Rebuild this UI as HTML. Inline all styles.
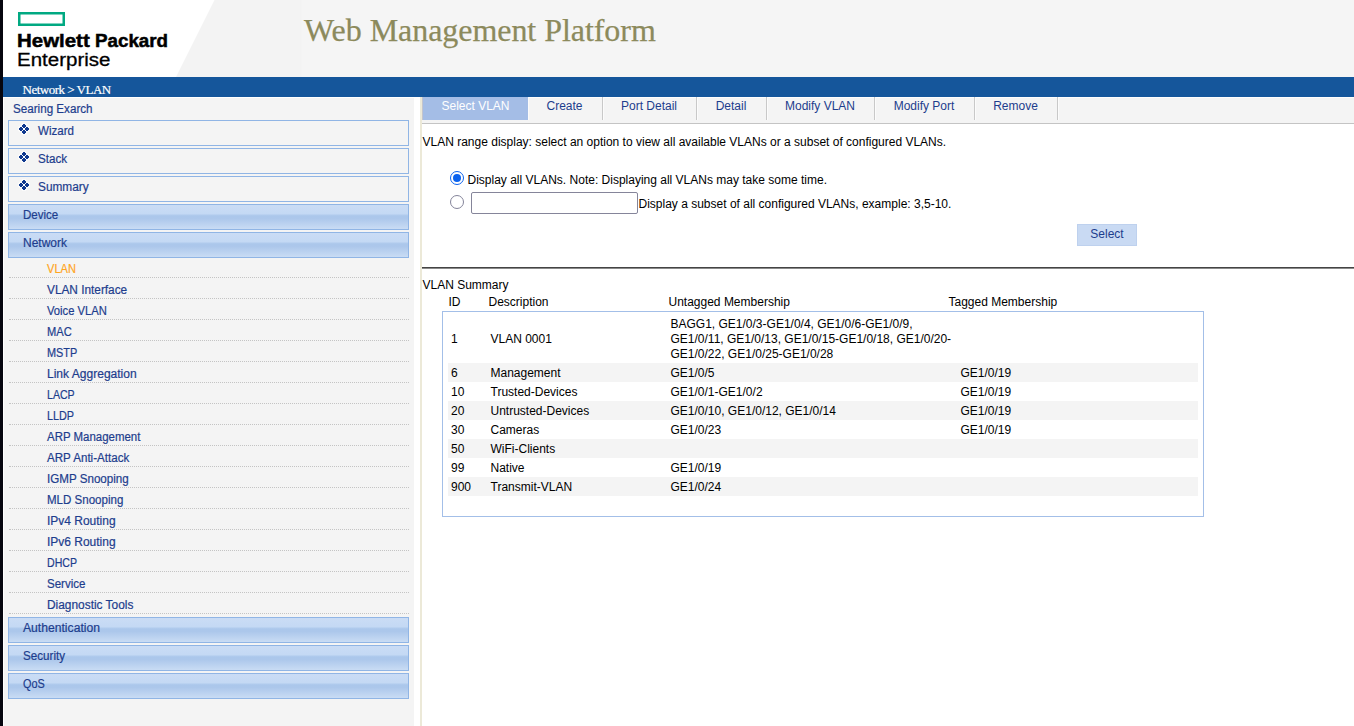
<!DOCTYPE html>
<html>
<head>
<meta charset="utf-8">
<title>Web Management Platform</title>
<style>
*{box-sizing:border-box;margin:0;padding:0}
html,body{width:1354px;height:726px;overflow:hidden;background:#fff}
body{position:relative;font-family:"Liberation Sans",sans-serif;font-size:12px;color:#000}
#blackbar{position:absolute;left:0;top:0;width:3px;height:726px;background:#06060f}
#header{position:absolute;left:3px;top:0;width:1351px;height:77px;background:#f5f5f5;overflow:hidden}
#header svg{position:absolute;left:0;top:0}
#title{position:absolute;left:301px;top:12px;font-family:"Liberation Serif",serif;font-size:32px;letter-spacing:-0.05px;line-height:37px;color:#8c8a5c;-webkit-text-stroke:0.25px #8c8a5c;white-space:nowrap}
#bluebar{position:absolute;left:3px;top:77px;width:1351px;height:20px;background:#15569b}
#crumb{position:absolute;left:19.5px;top:5px;font-family:"Liberation Serif",serif;font-size:13px;letter-spacing:-0.5px;line-height:16px;color:#fff;-webkit-text-stroke:0.2px #fff;white-space:nowrap}
#sidebar{position:absolute;left:3px;top:97px;width:411px;height:629px;background:#f4f4f4;color:#1d3d8d;-webkit-text-stroke:0.2px currentColor}
#devname{position:absolute;transform-origin:0 0;left:9.8px;top:5px;line-height:15px;white-space:nowrap}
.box{position:absolute;left:5px;width:401px;height:26px;border:1px solid #90b5e5;line-height:14px;white-space:nowrap}
.box span.t{position:absolute;transform-origin:0 0;left:14px;top:3px}
.box svg.i{position:absolute;left:9px;top:2px}
.box span.w{position:absolute;transform-origin:0 0;left:29px;top:3px}
.grad{background:linear-gradient(to bottom,#cadcf5 0%,#c4d9f4 36%,#abc7eb 45%,#acc7eb 56%,#c9dcf4 100%)}
.sub{position:absolute;left:6px;width:400px;height:21px;border-bottom:1px dotted #c4c4c4;line-height:14px;white-space:nowrap}
.sub span{position:absolute;transform-origin:0 0;left:38px;top:5px}
.sub.act span{color:#ffa51f}
#gap{position:absolute;left:414px;top:97px;width:6px;height:629px;background:#fff}
#vline{position:absolute;left:420px;top:97px;width:2px;height:629px;background:#ece9d8}
#main{position:absolute;left:422px;top:97px;width:932px;height:629px;background:#fff}
#tabs{position:absolute;left:0;top:0;width:932px;height:27px;background:#f4f4f4;border-top:1px solid #fdfdfd;border-bottom:1px solid #c4c4c4}
.tab{position:absolute;top:-1px;height:23px;box-shadow:1px 0 0 #fbfbfb;line-height:14px;color:#1d3d8d;text-align:center;border-right:1px solid #c8c8c8;padding-top:2px;padding-right:1px;white-space:nowrap}
.tab.sel{background:#a4bde6;color:#fff;border-right:none;padding-right:0;box-shadow:1px 0 0 #fbfbfb,-1px 0 0 #c3c4cc}
.abs{position:absolute;white-space:nowrap;line-height:14px}

.radio{position:absolute;width:14px;height:14px;border-radius:50%;border:1px solid #84849a;background:#fff}
.radio.on{border:1.5px solid #0b62ee}
.radio.on::after{content:"";position:absolute;left:1.5px;top:1.5px;width:8px;height:8px;border-radius:50%;background:#0b62ee}
#inp{position:absolute;left:49px;top:95px;width:167px;height:22px;border:1px solid #85859a;border-radius:2px;background:#fff}
#btn{position:absolute;left:655px;top:127px;width:60px;height:22px;background:#c9daf3;border:1px solid #bed1ee;color:#1d3d8d;text-align:center;line-height:14px;padding-top:2px}
#hr{position:absolute;left:0;top:170px;width:932px;height:2px;border-top:1px solid #444;border-bottom:1px solid #8a8a8a}
#tbox{position:absolute;left:20px;top:214px;width:762px;height:206px;border:1px solid #a3bfe8;background:#fff}
.row{position:absolute;left:5px;width:750px;height:19px}
.row.g{background:#f4f4f4}
.row span{position:absolute;top:3px;line-height:14px;white-space:nowrap}
.c1{left:3px}.c2{left:42.5px}.c3{left:222.5px}.c4{left:512.5px}
.hpb{transform-origin:0 0;font-weight:bold;font-size:18.7px;line-height:22px;color:#000;-webkit-text-stroke:0.5px #000}
</style>
</head>
<body>
<div id="blackbar"></div>
<div id="header">
<svg width="1351" height="77" viewBox="0 0 1351 77"><rect x="0" y="0" width="298.5" height="77" fill="#f3f3f3"/><polygon points="0,0 211.5,0 173,77 0,77" fill="#ffffff"/><rect x="16.25" y="13.25" width="44.5" height="11.5" fill="none" stroke="#01a982" stroke-width="2.5"/></svg>
<div class="abs hpb" id="hp1" style="left:13.7px;top:31px;transform:translateY(-0.6px) scaleX(1.094)">Hewlett</div>
<div class="abs hpb" id="hp1b" style="left:91.6px;top:31px;transform:translateY(-0.6px) scaleX(1.005)">Packard</div>
<div class="abs" id="hp2" style="left:13.6px;top:49px;font-size:18.8px;transform-origin:0 0;transform:scaleX(1.092);line-height:22px;color:#000;-webkit-text-stroke:0.3px #000">Enterprise</div>
<div id="title">Web Management Platform</div>
</div>
<div id="bluebar"><div id="crumb">Network &gt; VLAN</div></div>

<div id="sidebar">
<div id="devname" style="transform:scaleX(0.97)">Searing Exarch</div>
<div class="box" style="top:23px"><svg class="i" width="12" height="12" viewBox="-1 -1 12 12" shape-rendering="crispEdges"><path d="M4,0h2v1h1v2h-1v1h-2v-1h-1v-2h1z M1,3h2v1h1v2h-1v1h-2v-1h-1v-2h1z M7,3h2v1h1v2h-1v1h-2v-1h-1v-2h1z M4,6h2v1h1v2h-1v1h-2v-1h-1v-2h1z" fill="#fff" stroke="#fff" stroke-width="1.6" stroke-opacity="0.6"/><path d="M4,0h2v1h1v2h-1v1h-2v-1h-1v-2h1z M1,3h2v1h1v2h-1v1h-2v-1h-1v-2h1z M7,3h2v1h1v2h-1v1h-2v-1h-1v-2h1z M4,6h2v1h1v2h-1v1h-2v-1h-1v-2h1z" fill="#10398f"/><rect x="4" y="4" width="2" height="2" fill="#fff"/></svg><span class="w" style="transform:scaleX(0.963)">Wizard</span></div>
<div class="box" style="top:51px"><svg class="i" width="12" height="12" viewBox="-1 -1 12 12" shape-rendering="crispEdges"><path d="M4,0h2v1h1v2h-1v1h-2v-1h-1v-2h1z M1,3h2v1h1v2h-1v1h-2v-1h-1v-2h1z M7,3h2v1h1v2h-1v1h-2v-1h-1v-2h1z M4,6h2v1h1v2h-1v1h-2v-1h-1v-2h1z" fill="#fff" stroke="#fff" stroke-width="1.6" stroke-opacity="0.6"/><path d="M4,0h2v1h1v2h-1v1h-2v-1h-1v-2h1z M1,3h2v1h1v2h-1v1h-2v-1h-1v-2h1z M7,3h2v1h1v2h-1v1h-2v-1h-1v-2h1z M4,6h2v1h1v2h-1v1h-2v-1h-1v-2h1z" fill="#10398f"/><rect x="4" y="4" width="2" height="2" fill="#fff"/></svg><span class="w" style="left:28.5px;transform:scaleX(0.971)">Stack</span></div>
<div class="box" style="top:79px"><svg class="i" width="12" height="12" viewBox="-1 -1 12 12" shape-rendering="crispEdges"><path d="M4,0h2v1h1v2h-1v1h-2v-1h-1v-2h1z M1,3h2v1h1v2h-1v1h-2v-1h-1v-2h1z M7,3h2v1h1v2h-1v1h-2v-1h-1v-2h1z M4,6h2v1h1v2h-1v1h-2v-1h-1v-2h1z" fill="#fff" stroke="#fff" stroke-width="1.6" stroke-opacity="0.6"/><path d="M4,0h2v1h1v2h-1v1h-2v-1h-1v-2h1z M1,3h2v1h1v2h-1v1h-2v-1h-1v-2h1z M7,3h2v1h1v2h-1v1h-2v-1h-1v-2h1z M4,6h2v1h1v2h-1v1h-2v-1h-1v-2h1z" fill="#10398f"/><rect x="4" y="4" width="2" height="2" fill="#fff"/></svg><span class="w" style="left:28.5px;transform:scaleX(0.987)">Summary</span></div>
<div class="box grad" style="top:107px"><span class="t" style="transform:scaleX(0.962)">Device</span></div>
<div class="box grad" style="top:135px"><span class="t" style="transform:scaleX(0.998)">Network</span></div>
<div class="sub act" style="top:160px"><span style="transform:scaleX(0.922)">VLAN</span></div>
<div class="sub" style="top:181px"><span style="transform:scaleX(0.985)">VLAN Interface</span></div>
<div class="sub" style="top:202px"><span style="transform:scaleX(0.936)">Voice VLAN</span></div>
<div class="sub" style="top:223px"><span style="transform:scaleX(0.926)">MAC</span></div>
<div class="sub" style="top:244px"><span style="transform:scaleX(0.908)">MSTP</span></div>
<div class="sub" style="top:265px"><span style="transform:scaleX(1.003)">Link Aggregation</span></div>
<div class="sub" style="top:286px"><span style="transform:scaleX(0.882)">LACP</span></div>
<div class="sub" style="top:307px"><span style="transform:scaleX(0.901)">LLDP</span></div>
<div class="sub" style="top:328px"><span style="transform:scaleX(0.954)">ARP Management</span></div>
<div class="sub" style="top:349px"><span style="transform:scaleX(0.966)">ARP Anti-Attack</span></div>
<div class="sub" style="top:370px"><span style="transform:scaleX(0.968)">IGMP Snooping</span></div>
<div class="sub" style="top:391px"><span style="transform:scaleX(0.962)">MLD Snooping</span></div>
<div class="sub" style="top:412px"><span style="transform:scaleX(0.998)">IPv4 Routing</span></div>
<div class="sub" style="top:433px"><span style="transform:scaleX(0.998)">IPv6 Routing</span></div>
<div class="sub" style="top:454px"><span style="transform:scaleX(0.88)">DHCP</span></div>
<div class="sub" style="top:475px"><span style="transform:scaleX(0.961)">Service</span></div>
<div class="sub" style="top:496px"><span style="transform:scaleX(0.991)">Diagnostic Tools</span></div>
<div class="box grad" style="top:520px"><span class="t" style="transform:scaleX(1.012)">Authentication</span></div>
<div class="box grad" style="top:548px"><span class="t" style="transform:scaleX(0.969)">Security</span></div>
<div class="box grad" style="top:576px"><span class="t" style="transform:scaleX(0.905)">QoS</span></div>
</div>
<div id="gap"></div>
<div style="position:absolute;left:3px;top:97px;width:1px;height:629px;background:#fff"></div>
<div style="position:absolute;left:3px;top:97px;width:411px;height:1px;background:#fff"></div>
<div id="vline"></div>

<div id="main">
<div id="tabs">
<div class="tab sel" style="left:1px;width:105px">Select VLAN</div>
<div class="tab" style="left:106px;width:75px">Create</div>
<div class="tab" style="left:181px;width:94px">Port Detail</div>
<div class="tab" style="left:275px;width:70px">Detail</div>
<div class="tab" style="left:345px;width:108px">Modify VLAN</div>
<div class="tab" style="left:453px;width:100px">Modify Port</div>
<div class="tab" style="left:553px;width:83px">Remove</div>
</div>
<div class="abs" id="intro" style="left:0.5px;top:38px">VLAN range display: select an option to view all available VLANs or a subset of configured VLANs.</div>
<div class="radio on" style="left:28px;top:74px"></div>
<div class="abs" id="r1t" style="left:45.5px;top:76px">Display all VLANs. Note: Displaying all VLANs may take some time.</div>
<div class="radio" style="left:28px;top:98px"></div>
<div id="inp"></div>
<div class="abs" id="r2t" style="left:216.5px;top:100px">Display a subset of all configured VLANs, example: 3,5-10.</div>
<div id="btn">Select</div>
<div id="hr"></div>
<div class="abs" id="vs" style="left:0.5px;top:181px">VLAN Summary</div>
<div class="abs" style="left:26.5px;top:198px">ID</div>
<div class="abs" style="left:66.5px;top:198px">Description</div>
<div class="abs" style="left:246.5px;top:198px">Untagged Membership</div>
<div class="abs" style="left:526.5px;top:198px">Tagged Membership</div>
<div id="tbox">
<div class="row" style="top:5px;height:46px"><span class="c1" style="top:15px">1</span><span class="c2" style="top:15px">VLAN 0001</span><span class="c3" style="top:0px;line-height:15px;white-space:normal;width:290px">BAGG1, GE1/0/3-GE1/0/4, GE1/0/6-GE1/0/9, GE1/0/11, GE1/0/13, GE1/0/15-GE1/0/18, GE1/0/20-GE1/0/22, GE1/0/25-GE1/0/28</span></div>
<div class="row g" style="top:51px"><span class="c1">6</span><span class="c2">Management</span><span class="c3">GE1/0/5</span><span class="c4">GE1/0/19</span></div>
<div class="row" style="top:70px"><span class="c1">10</span><span class="c2">Trusted-Devices</span><span class="c3">GE1/0/1-GE1/0/2</span><span class="c4">GE1/0/19</span></div>
<div class="row g" style="top:89px"><span class="c1">20</span><span class="c2">Untrusted-Devices</span><span class="c3">GE1/0/10, GE1/0/12, GE1/0/14</span><span class="c4">GE1/0/19</span></div>
<div class="row" style="top:108px"><span class="c1">30</span><span class="c2">Cameras</span><span class="c3">GE1/0/23</span><span class="c4">GE1/0/19</span></div>
<div class="row g" style="top:127px"><span class="c1">50</span><span class="c2">WiFi-Clients</span></div>
<div class="row" style="top:146px"><span class="c1">99</span><span class="c2">Native</span><span class="c3">GE1/0/19</span></div>
<div class="row g" style="top:165px"><span class="c1">900</span><span class="c2">Transmit-VLAN</span><span class="c3">GE1/0/24</span></div>
</div>
</div>
</body>
</html>
